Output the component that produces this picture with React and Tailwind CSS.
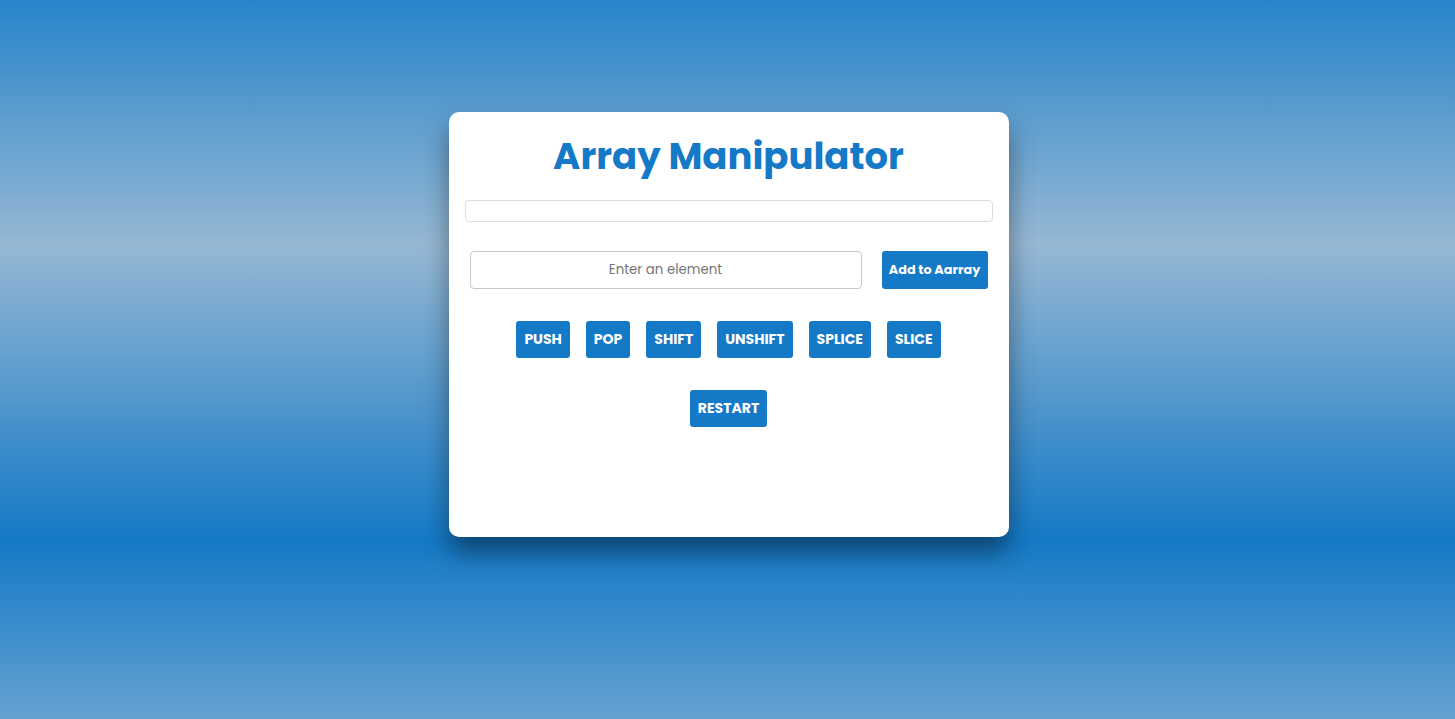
export default function App() {
  const ops = ["PUSH", "POP", "SHIFT", "UNSHIFT", "SPLICE", "SLICE"];
  const btn =
    "h-[37px] px-2 bg-[#1479c7] text-white text-[14px] font-bold rounded-[3px] flex items-center justify-center";
  return (
    <div
      className="w-full h-[719px] flex justify-center bg-[linear-gradient(to_bottom,#2884ca_0%,#96b8d4_34%,#1479c6_75%,#65a2d2_100%)]"
      style={{ fontFamily: '"Poppins", "Inter", "Open Sans", sans-serif' }}
    >
      <div className="mt-[112px] ml-[2px] w-[560px] h-[425px] bg-white rounded-[10px] px-4 pt-5 flex flex-col shadow-[0_16px_26px_rgba(0,0,0,0.42)]">
        <h1 className="text-[37px] leading-[48px] font-bold text-[#1479c7] text-center">
          Array Manipulator
        </h1>
        <div className="mt-5 h-[22px] border border-[#dcdcdc] rounded-[4px]"></div>
        <div className="mt-[29px] flex items-center px-[5px] gap-5">
          <input
            className="w-[392px] h-[38px] border border-[#c8c8c8] rounded-[4px] text-center text-[13.333px] placeholder:text-[#757575] outline-none"
            placeholder="Enter an element"
          />
          <button className="w-[106px] h-[38px] bg-[#1479c7] text-white text-[12.8px] font-bold rounded-[3px]">
            Add to Aarray
          </button>
        </div>
        <div className="mt-8 flex justify-center gap-4">
          {ops.map((o) => (
            <button key={o} className={btn}>
              {o}
            </button>
          ))}
        </div>
        <div className="mt-8 flex justify-center">
          <button className={btn}>RESTART</button>
        </div>
      </div>
    </div>
  );
}
